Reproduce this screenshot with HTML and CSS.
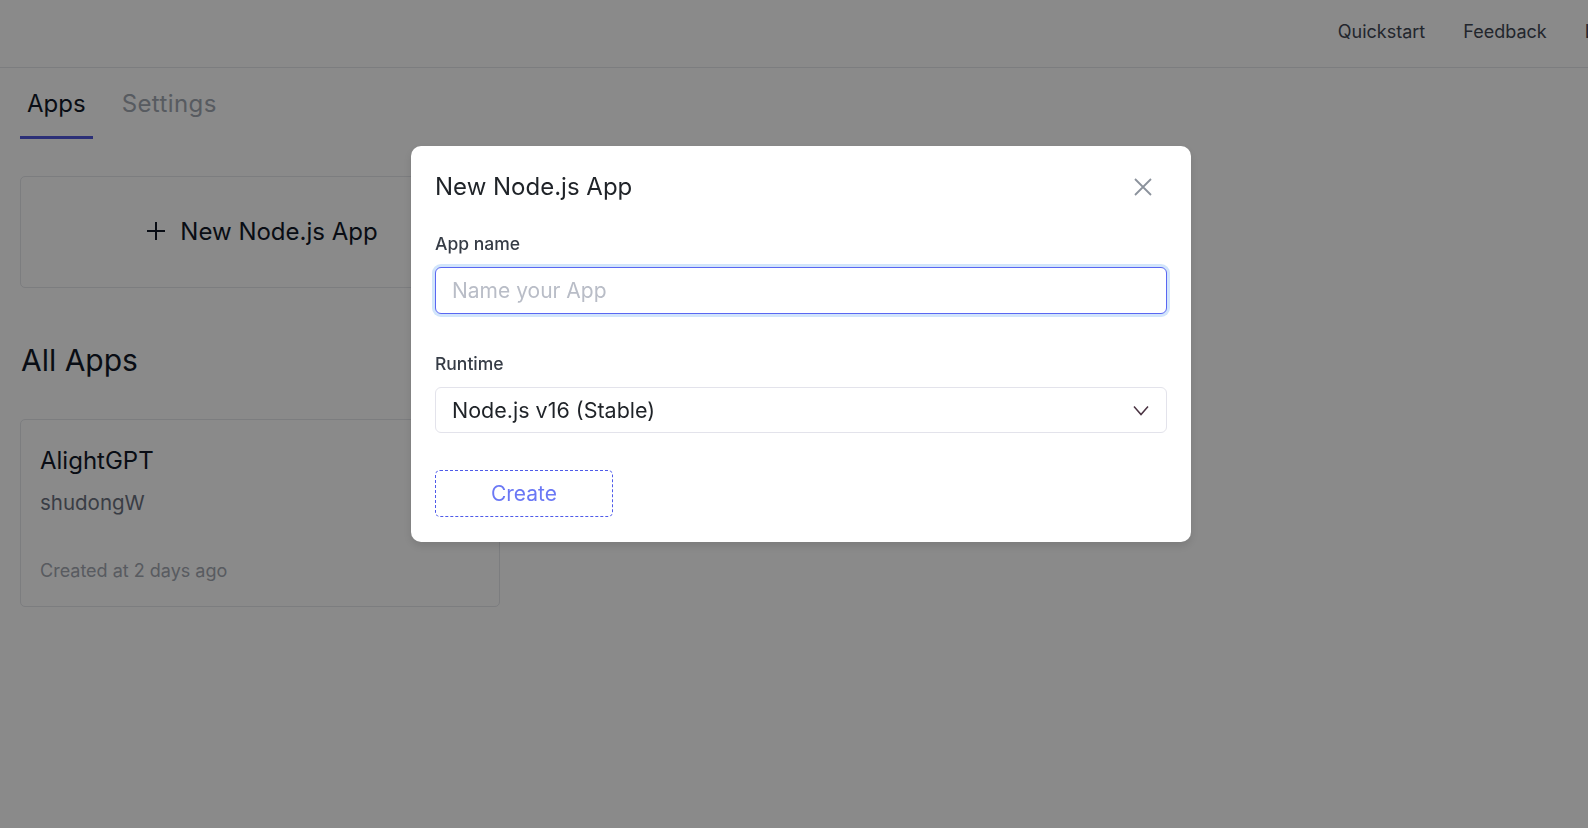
FILE: index.html
```html
<!DOCTYPE html>
<html lang="en">
<head>
<meta charset="utf-8">
<title>Apps</title>
<link rel="stylesheet" href="styles.css">
</head>
<body>
<div class="page">
  <header class="topbar">
    <nav class="topnav">
      <a class="navlink">Quickstart</a>
      <a class="navlink">Feedback</a>
      <a class="navlink">Logout</a>
    </nav>
  </header>
  <main class="content">
    <div class="tabs">
      <div class="tab active">Apps</div>
      <div class="tab">Settings</div>
    </div>
    <div class="new-card">
      <svg class="plus-icon" width="20" height="20" viewBox="0 0 20 20"><path d="M10 1v18M1 10h18" stroke="#111827" stroke-width="2" fill="none"/></svg>
      <span>New Node.js App</span>
    </div>
    <h2 class="section-title">All Apps</h2>
    <div class="app-card">
      <div class="app-name">AlightGPT</div>
      <div class="app-owner">shudongW</div>
      <div class="app-date">Created at 2 days ago</div>
    </div>
  </main>
</div>
<div class="overlay">
  <div class="modal">
    <div class="modal-head">
      <div class="modal-title">New Node.js App</div>
      <svg class="close-icon" width="18" height="18" viewBox="0 0 18 18"><path d="M1 1l16 16M17 1L1 17" stroke="#8b929c" stroke-width="1.8" fill="none"/></svg>
    </div>
    <label class="field-label">App name</label>
    <input class="text-input" type="text" placeholder="Name your App">
    <label class="field-label runtime-label">Runtime</label>
    <div class="select-box">
      <span>Node.js v16 (Stable)</span>
      <svg class="chevron" width="16" height="11" viewBox="0 0 16 11"><path d="M1 1.5l7 8 7-8" stroke="#4a3342" stroke-width="1.5" fill="none"/></svg>
    </div>
    <button class="create-btn">Create</button>
  </div>
</div>
</body>
</html>
```

FILE: styles.css
```css
* { box-sizing: border-box; }
html, body {
  margin: 0;
  padding: 0;
  width: 1588px;
  height: 828px;
  overflow: hidden;
  background: #ffffff;
  font-family: Inter, "Noto Sans", "Liberation Sans", sans-serif;
  color: #111827;
}
.page {
  width: 1668px;
}
.topbar {
  height: 68px;
  border-bottom: 1px solid #e5e7eb;
  display: flex;
  justify-content: flex-end;
  align-items: flex-start;
  padding: 20px 24px 0 0;
}
.topnav {
  display: flex;
  gap: 38px;
}
.navlink {
  font-size: 18px;
  line-height: 24px;
  color: #3f4753;
}
.content {
  padding-left: 20px;
}
.tabs {
  display: flex;
  gap: 22px;
}
.tab {
  font-size: 24px;
  line-height: 32px;
  padding: 20px 7px 16px;
  border-bottom: 3px solid transparent;
  color: #a2a8b2;
}
.tab + .tab {
  letter-spacing: 0.4px;
}
.tab.active {
  color: #111827;
  border-bottom-color: #5058dd;
}
.new-card {
  margin-top: 37px;
  width: 480px;
  height: 112px;
  border: 1px solid #e5e7eb;
  border-radius: 5px;
  display: flex;
  align-items: center;
  justify-content: center;
  gap: 14px;
  font-size: 24px;
  line-height: 32px;
  color: #111827;
  padding-left: 4px;
}
.plus-icon { margin-top: -2px; }
.section-title {
  margin: 52px 0 39px;
  font-size: 30px;
  line-height: 40px;
  font-weight: 400;
  padding-left: 1px;
  color: #111827;
}
.app-card {
  width: 480px;
  height: 188px;
  border: 1px solid #e5e7eb;
  border-radius: 5px;
  padding: 25px 19px 23px;
}
.app-name {
  font-size: 24px;
  line-height: 32px;
  color: #111827;
}
.app-owner {
  margin-top: 12px;
  font-size: 20.5px;
  line-height: 28px;
  color: #6b7280;
}
.app-date {
  margin-top: 42px;
  font-size: 18px;
  line-height: 24px;
  color: #a3a8b1;
}
.overlay {
  position: fixed;
  inset: 0;
  background: rgba(0, 0, 0, 0.46);
  display: flex;
  justify-content: center;
  align-items: flex-start;
  padding-top: 146px;
}
.modal {
  margin-left: 14px;
  width: 780px;
  height: 396px;
  background: #ffffff;
  border-radius: 10px;
  box-shadow: 0 4px 10px rgba(0, 0, 0, 0.12);
  padding: 25px 24px 25px;
  display: flex;
  flex-direction: column;
  align-items: flex-start;
}
.modal-head {
  width: 100%;
  display: flex;
  justify-content: space-between;
  align-items: flex-start;
  padding-right: 15px;
}
.modal-title {
  font-size: 24px;
  line-height: 32px;
  color: #1f2328;
}
.close-icon { margin-top: 7px; }
.field-label {
  margin-top: 29px;
  font-size: 17.5px;
  line-height: 24px;
  font-weight: 500;
  color: #363c46;
}
.runtime-label { margin-top: 38px; }
.text-input {
  margin-top: 11px;
  width: 100%;
  height: 47px;
  border: 1px solid #5a67f2;
  border-radius: 6px;
  box-shadow: 0 0 0 3px #d2e5fb;
  padding: 0 16px;
  font-family: inherit;
  font-size: 21px;
  color: #1f2328;
  outline: none;
}
.text-input::placeholder { color: #b9bdc7; }
.select-box {
  margin-top: 11px;
  width: 100%;
  height: 46px;
  border: 1px solid #e3e3eb;
  border-radius: 6px;
  padding: 0 17px 0 16px;
  display: flex;
  align-items: center;
  justify-content: space-between;
  font-size: 21.5px;
  color: #1f2328;
}
.create-btn {
  margin-top: 37px;
  width: 178px;
  height: 47px;
  background: #ffffff;
  border: 1px dashed #4f5be9;
  border-radius: 5px;
  font-family: inherit;
  font-size: 21px;
  color: #6b78f5;
  cursor: pointer;
}
```
